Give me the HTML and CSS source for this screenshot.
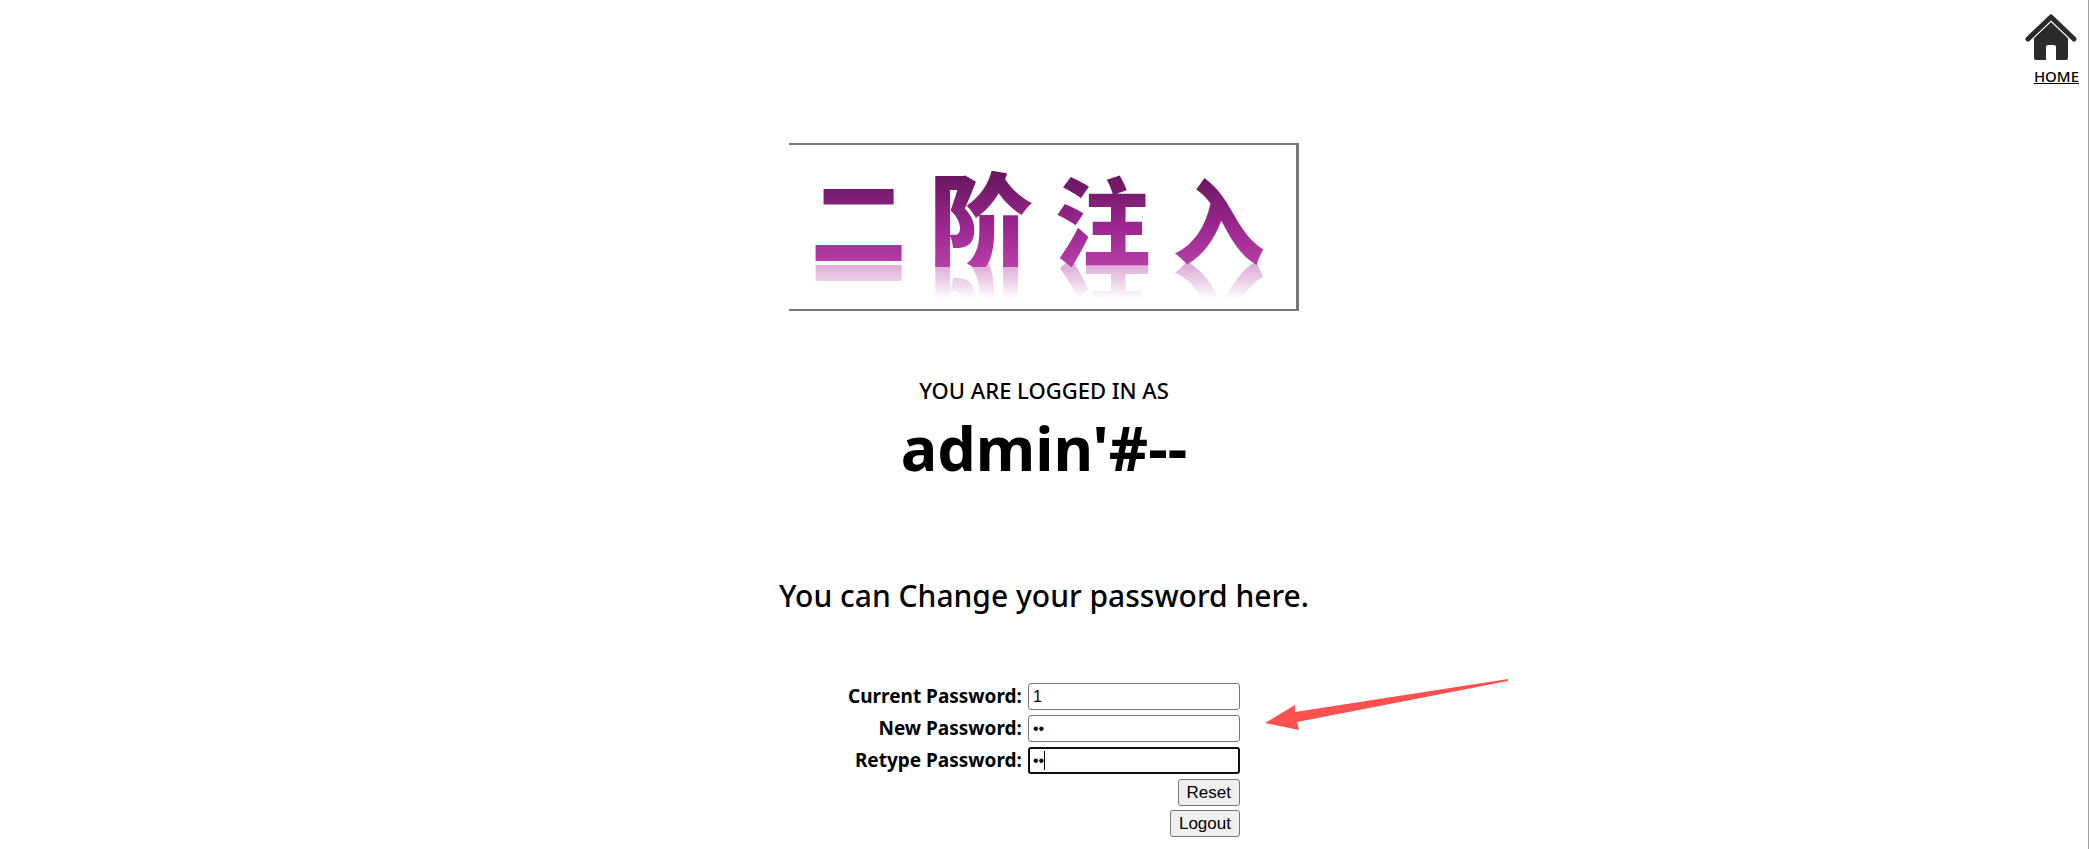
FILE: index.html
```
<!DOCTYPE html>
<html lang="en">
<head>
    <meta charset="utf-8">
    <meta name="viewport" content="width=device-width, initial-scale=1">
    <title>Change Password</title>
    <link rel="stylesheet" href="styles.css">
</head>

<body>
    <header class="topbar">
        <a class="home" href="index.html">
            <svg class="home-icon" viewBox="0 0 52 48" aria-hidden="true">
                <path d="M9 24 L26 8 L43 24 V44 Q43 46 41 46 H31 V33 Q31 31 29 31 H23 Q21 31 21 33 V46 H11 Q9 46 9 44 Z" fill="#2b2b2b"/>
                <path d="M3 25 L26 3 L49 25" fill="none" stroke="#fff" stroke-width="7" stroke-linejoin="round"/>
                <path d="M3 25 L26 3 L49 25" fill="none" stroke="#2b2b2b" stroke-width="5" stroke-linecap="round" stroke-linejoin="round"/>
            </svg>
            HOME
        </a>
    </header>

    <main class="content">
        <div class="banner" lang="zh-CN"><span>二</span><span class="tall">阶</span><span>注</span><span class="small">入</span></div>

        <p class="status">YOU ARE LOGGED IN AS</p>
        <h1 class="username">admin'#--</h1>
        <p class="hint">You can Change your password here.</p>

        <form class="password-form" method="post" action="#">
            <table>
                <tr>
                    <th><label for="current">Current Password:</label></th>
                    <td><input type="text" id="current" name="current_password" value="1"></td>
                </tr>
                <tr>
                    <th><label for="new">New Password:</label></th>
                    <td><input type="password" id="new" name="password" value="11"></td>
                </tr>
                <tr>
                    <th><label for="retype">Retype Password:</label></th>
                    <td class="active"><input type="password" id="retype" name="re_password" value="11"></td>
                </tr>
                <tr>
                    <td colspan="2" class="action"><button type="submit">Reset</button></td>
                </tr>
                <tr>
                    <td colspan="2" class="action"><button type="button">Logout</button></td>
                </tr>
            </table>
            <svg class="arrow" viewBox="0 0 244 52" aria-hidden="true">
                <path d="M0 44 L30 26 V33 L243 0 V2 L32 43 L34 51 Z" fill="#ff5050"/>
            </svg>
        </form>
    </main>
</body>
</html>
```
FILE: styles.css
```
* {
    box-sizing: border-box;
}

body {
    margin: 0;
    min-height: 100vh;
    border-right: 1px solid #a0a0a0;
    background: #fff;
    color: #000;
    font-family: "Noto Sans", "Noto Sans CJK SC", sans-serif;
    font-weight: 500;
}

.topbar {
    display: flex;
    justify-content: flex-end;
    padding: 14px 9px 0 0;
}

.home {
    display: flex;
    flex-direction: column;
    align-items: flex-end;
    color: #000;
    font-size: 15px;
    line-height: 24px;
}

.home-icon {
    width: 52px;
    height: 48px;
    margin: 0 2px 2px 0;
}

.content {
    display: flex;
    flex-direction: column;
    align-items: center;
    padding-top: 55px;
}

.banner {
    display: flex;
    justify-content: center;
    align-items: center;
    gap: 22px;
    width: 510px;
    height: 168px;
    padding: 0 10px 20px 0;
    border: solid #777;
    border-width: 2px 3px 2px 0;
    font-family: "Noto Sans CJK SC", sans-serif;
    font-weight: 900;
    font-size: 96px;
    line-height: 100px;
}

.banner span {
    background: linear-gradient(#6a1760 10%, #9c2790 60%, #b840a8);
    -webkit-background-clip: text;
    background-clip: text;
    color: transparent;
    -webkit-box-reflect: below -8px linear-gradient(transparent 60%, rgba(0, 0, 0, 0.5));
}

.banner .tall {
    font-size: 104px;
}

.banner .small {
    font-size: 92px;
}

.status {
    margin: 63px 0 0;
    font-size: 22px;
    line-height: 32px;
}

.username {
    margin: 2px 0 0;
    font-size: 61px;
    line-height: 80px;
}

.hint {
    margin: 86px 0 0;
    font-size: 30px;
    line-height: 44px;
}

.password-form {
    position: relative;
    margin-top: 65px;
}

.password-form table {
    border-collapse: collapse;
}

.password-form th,
.password-form td {
    padding: 0 0 5px;
    text-align: right;
    font-size: 19px;
    line-height: 27px;
}

.password-form th {
    padding-right: 6px;
}

.password-form input {
    display: block;
    width: 212px;
    height: 27px;
    padding: 1px 4px;
    border: 1px solid #767676;
    border-radius: 3px;
    outline: none;
    font-family: "Liberation Sans", Arial, sans-serif;
    font-size: 16px;
}

.password-form .active {
    position: relative;
}

.password-form .active input {
    padding: 0 3px;
    border: 2px solid #101010;
}

/* text caret in the active field */
.password-form .active::after {
    content: "";
    position: absolute;
    left: 16px;
    top: 4px;
    width: 1px;
    height: 19px;
    background: #000;
}

.password-form .action {
    padding-bottom: 4px;
}

.password-form button {
    display: block;
    height: 27px;
    margin-left: auto;
    padding: 0 8px;
    border: 1px solid #767676;
    border-radius: 3px;
    background: #efefef;
    color: #000;
    font-family: "Liberation Sans", Arial, sans-serif;
    font-size: 17px;
}

/* pointer lying beside the form */
.arrow {
    position: absolute;
    left: 100%;
    top: -4px;
    width: 244px;
    height: 52px;
    margin-left: 25px;
}
```
